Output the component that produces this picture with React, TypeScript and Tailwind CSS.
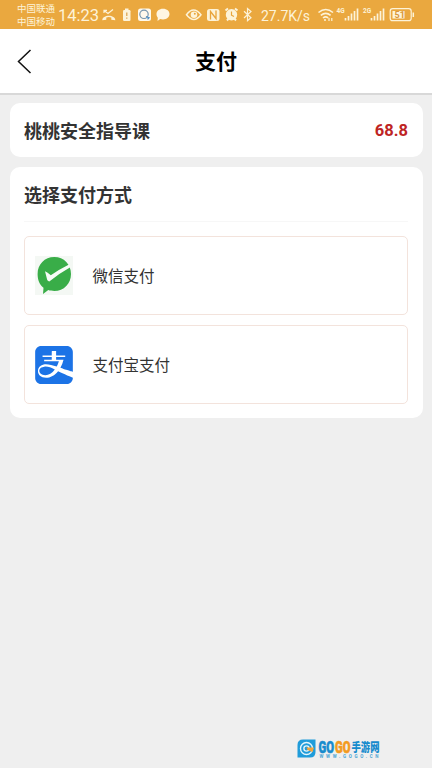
import React from 'react';
import { SiAlipay } from 'react-icons/si';

const StatusIcons = () => (
  <svg width="155" height="29" viewBox="100 0 155 29" fill="none" className="shrink-0">
    {/* llamada perdida */}
    <path d="M104 10.500l4 3 5-4M104 13v-2.700h3" stroke="#FDF3D8" strokeWidth="1.200" />
    <path d="M102.300 20.300c0-6 13-6 13 0l-4-.6v-2.300q-2.500-.8-5 0v2.300z" fill="#FDF3D8" />
    {/* batería */}
    <rect x="123" y="10" width="7.500" height="11" rx="1.200" fill="#FDF3D8" />
    <rect x="125" y="8.500" width="3.500" height="2" fill="#FDF3D8" />
    <path d="M126.800 12.500v3.500M126.800 17.500v1.300" stroke="#D9A04A" strokeWidth="1.200" />
    {/* buscador */}
    <rect x="138" y="8.500" width="13" height="12.500" rx="2.500" fill="#FFF9EC" />
    <circle cx="144" cy="14.300" r="4.200" stroke="#7796AE" strokeWidth="1.200" />
    <path d="M146 16.500l3 1.200-1.500 1.700" stroke="#4F8FC4" strokeWidth="1.300" />
    {/* mensaje */}
    <path d="M163 8.800c4 0 6.500 2.300 6.500 5.300s-2.500 5.300-6.500 5.300c-1 0-2-.1-2.800-.4l-2.700 2 .3-3.300c-.9-1-1.300-2.200-1.300-3.600 0-3 2.500-5.300 6.500-5.300z" fill="#FFF6E2" />
    {/* ojo */}
    <path d="M186.500 14.700q7-9.500 14.500 0q-7 9.500-14.500 0z" stroke="#FDF3D8" strokeWidth="1.500" />
    <circle cx="194" cy="14.700" r="3.300" fill="#FDF3D8" />
    <circle cx="194.800" cy="13.800" r="1" fill="#E9A53C" />
    {/* nfc */}
    <rect x="207" y="9" width="12.500" height="12" rx="2.500" fill="#FDF3D8" />
    <path d="M210.500 19.500v-8l5.500 7v-8" stroke="#E9A53C" strokeWidth="1.300" />
    {/* alarma */}
    <path d="M225.500 10.500l2.500-2M237.500 10.500l-2.500-2M227 20.500l1.500-1.800M236 20.500l-1.500-1.800" stroke="#FDF3D8" strokeWidth="2" />
    <circle cx="231.500" cy="14.800" r="5.700" fill="#FDF3D8" />
    <path d="M231.500 11.500v3.700l2.500 1.300" stroke="#E9A53C" strokeWidth="1.200" />
    {/* bluetooth */}
    <path d="M244 11.200l7 6.600-3.500 3V8.500l3.500 3-7 6.500" stroke="#FDF3D8" strokeWidth="1.200" />
  </svg>
);

const SignalIcons = () => (
  <svg width="102" height="29" viewBox="315 0 102 29" fill="none" className="shrink-0">
    <path d="M318.500 12.500q7.200-6 14.500 0M320.800 15.300q5-4 9.800 0M323 18q2.600-2.200 5.200 0" stroke="#FDF3D8" strokeWidth="1.600" />
    <circle cx="325" cy="20" r="1" fill="#FDF3D8" />
    <path d="M329 18v3M331.800 18v3" stroke="#FDF3D8" strokeWidth="1.200" />
    <text x="336.500" y="13.300" fontSize="6.500" fontWeight="700" fill="#FDF3D8" className="font-['Roboto',sans-serif]">4G</text>
    <path d="M345.500 18v2.500M348.500 16v4.500M351.500 13.500v7M354.500 11v9.500M357.500 8.500v12" stroke="#FDF3D8" strokeWidth="1.700" />
    <text x="363" y="13.300" fontSize="6.500" fontWeight="700" fill="#FDF3D8" className="font-['Roboto',sans-serif]">2G</text>
    <path d="M371.500 18v2.500M374.500 16v4.500M377.500 13.500v7M380.500 11v9.500M383.500 8.500v12" stroke="#FDF3D8" strokeWidth="1.700" />
    <rect x="390.200" y="8.700" width="21" height="12" rx="2.500" stroke="#FDF3D8" strokeWidth="1.200" />
    <rect x="392.500" y="11" width="12" height="7.500" fill="#FDF3D8" />
    <text x="394.500" y="18" fontSize="9" fontWeight="700" fill="#D9983A" className="font-['Roboto',sans-serif]">51</text>
    <path d="M413.300 12.500v4.500" stroke="#FDF3D8" strokeWidth="1.500" />
  </svg>
);

const WechatPayIcon = () => (
  <div className="w-[38px] h-[39px] bg-[#F4F8F4] shrink-0">
    <svg width="38" height="39" viewBox="0 0 38 39">
      <path d="M19.300 1C29 1 36 8.500 36 18S29 35 19.300 35c-2 0-4.300-.3-6-.9L8 38l.5-6.200C4.300 28.500 2.600 23.500 2.600 18 2.600 8.500 9.600 1 19.300 1z" fill="#39AD48" />
      <path d="M10 15.300q2.500.8 5.800 4Q24 13.500 34 8.500l1.700 2.500Q24 17.500 14.300 25.500q-1.900-.2-2.200-1.900z" fill="#F7FCF7" />
    </svg>
  </div>
);

const AlipayIcon = () => (
  <div className="w-[38px] h-[38px] rounded-[5px] bg-white shrink-0">
    <SiAlipay size={38} color="#1C73E6" />
  </div>
);

const metodos = [
  { nombre: '微信支付', icon: WechatPayIcon },
  { nombre: '支付宝支付', icon: AlipayIcon },
];

const Watermark = () => (
  <div className="absolute left-[297px] top-[738px]">
    <svg width="88" height="24" viewBox="0 0 88 24" fill="none">
      <path d="M6 1.500h12.500V14q0 5.500-5.500 5.500H.5V7Q.5 1.500 6 1.500z" fill="#209CDA" />
      <circle cx="9.500" cy="10.500" r="6" stroke="#E4F6FC" strokeWidth="1.400" />
      <circle cx="9.500" cy="10.500" r="2.600" stroke="#E4F6FC" strokeWidth="1.400" />
      <path d="M9.500 9.500H17l-1.500 4.500-5-2z" fill="#F5A43A" />
      <text x="21.500" y="14.500" fontSize="17" fontWeight="900" textLength="15.500" lengthAdjust="spacingAndGlyphs" fill="#168BCD" stroke="#168BCD" strokeWidth="0.600" className="font-['Roboto',sans-serif]">GO</text>
      <text x="38" y="14.500" fontSize="17" fontWeight="900" textLength="15.500" lengthAdjust="spacingAndGlyphs" fill="#F39A20" stroke="#F39A20" strokeWidth="0.600" className="font-['Roboto',sans-serif]">GO</text>
      <text x="54.500" y="14" fontSize="12" fontWeight="900" textLength="28" lengthAdjust="spacingAndGlyphs" fill="#168BCD" className="font-['Noto_Sans_CJK_SC',sans-serif]">手游网</text>
      <text x="22.500" y="19.800" fontSize="4.500" fontWeight="700" textLength="59" fill="#4AA5D4" className="font-['Roboto',sans-serif]">WWW.GOGO.CN</text>
    </svg>
  </div>
);

export default function App() {
  return (
    <div className="relative w-full min-h-screen overflow-hidden bg-[#EFEFEF] font-['Noto_Sans_CJK_SC',sans-serif]">
      {/* BARRA DE ESTADO */}
      <div className="h-[29px] bg-[#EAA83F] pl-[17px] flex items-center text-[#FDF3D8] whitespace-nowrap">
        <div className="w-[41px] text-[9.5px] leading-[13px] shrink-0">
          <div>中国联通</div>
          <div>中国移动</div>
        </div>
        <div className="w-[42px] pt-[3px] font-['Roboto',sans-serif] text-[16.5px] shrink-0">14:23</div>
        <StatusIcons />
        <div className="w-[60px] pl-[6px] pt-[3px] font-['Roboto',sans-serif] text-[14px] shrink-0">27.7K/s</div>
        <SignalIcons />
      </div>

      {/* HEADER */}
      <header className="h-[66px] bg-white border-b-2 border-[#D8D8D8] grid grid-cols-3 items-center">
        <svg width="16" height="26" viewBox="0 0 16 26" fill="none" className="ml-4">
          <path d="M14.500 2L2.500 13.500 14.500 25" stroke="#111111" strokeWidth="1.500" />
        </svg>
        <h1 className="pb-[2px] text-center text-[21px] leading-none font-bold text-black">支付</h1>
      </header>

      <main className="px-[9.500px] pt-2 flex flex-col gap-[10px]">
        <div className="h-[54px] rounded-[10px] bg-white px-[14.500px] flex items-center justify-between">
          <span className="text-[18px] font-bold text-[#333333]">桃桃安全指导课</span>
          <span className="pt-[2px] font-['Roboto',sans-serif] text-[16.5px] font-bold text-[#BE2424]">68.8</span>
        </div>

        <section className="h-[251px] rounded-[10px] bg-white px-[14.500px]">
          <h2 className="h-[55px] border-b border-[#F7F7F7] flex items-center text-[18px] font-bold text-[#333333]">
            选择支付方式
          </h2>
          <div className="mt-[14px] flex flex-col gap-[10px]">
            {metodos.map((m, i) => {
              const Icon = m.icon;

              return (
                <button
                  key={i}
                  className="w-full h-[79px] rounded-[5px] border border-[#F3E3DC] bg-white pl-[10px] flex items-center gap-[19.500px]"
                >
                  <Icon />
                  <span className="text-[15.500px] text-[#333333]">{m.nombre}</span>
                </button>
              );
            })}
          </div>
        </section>
      </main>

      <Watermark />
    </div>
  );
}
